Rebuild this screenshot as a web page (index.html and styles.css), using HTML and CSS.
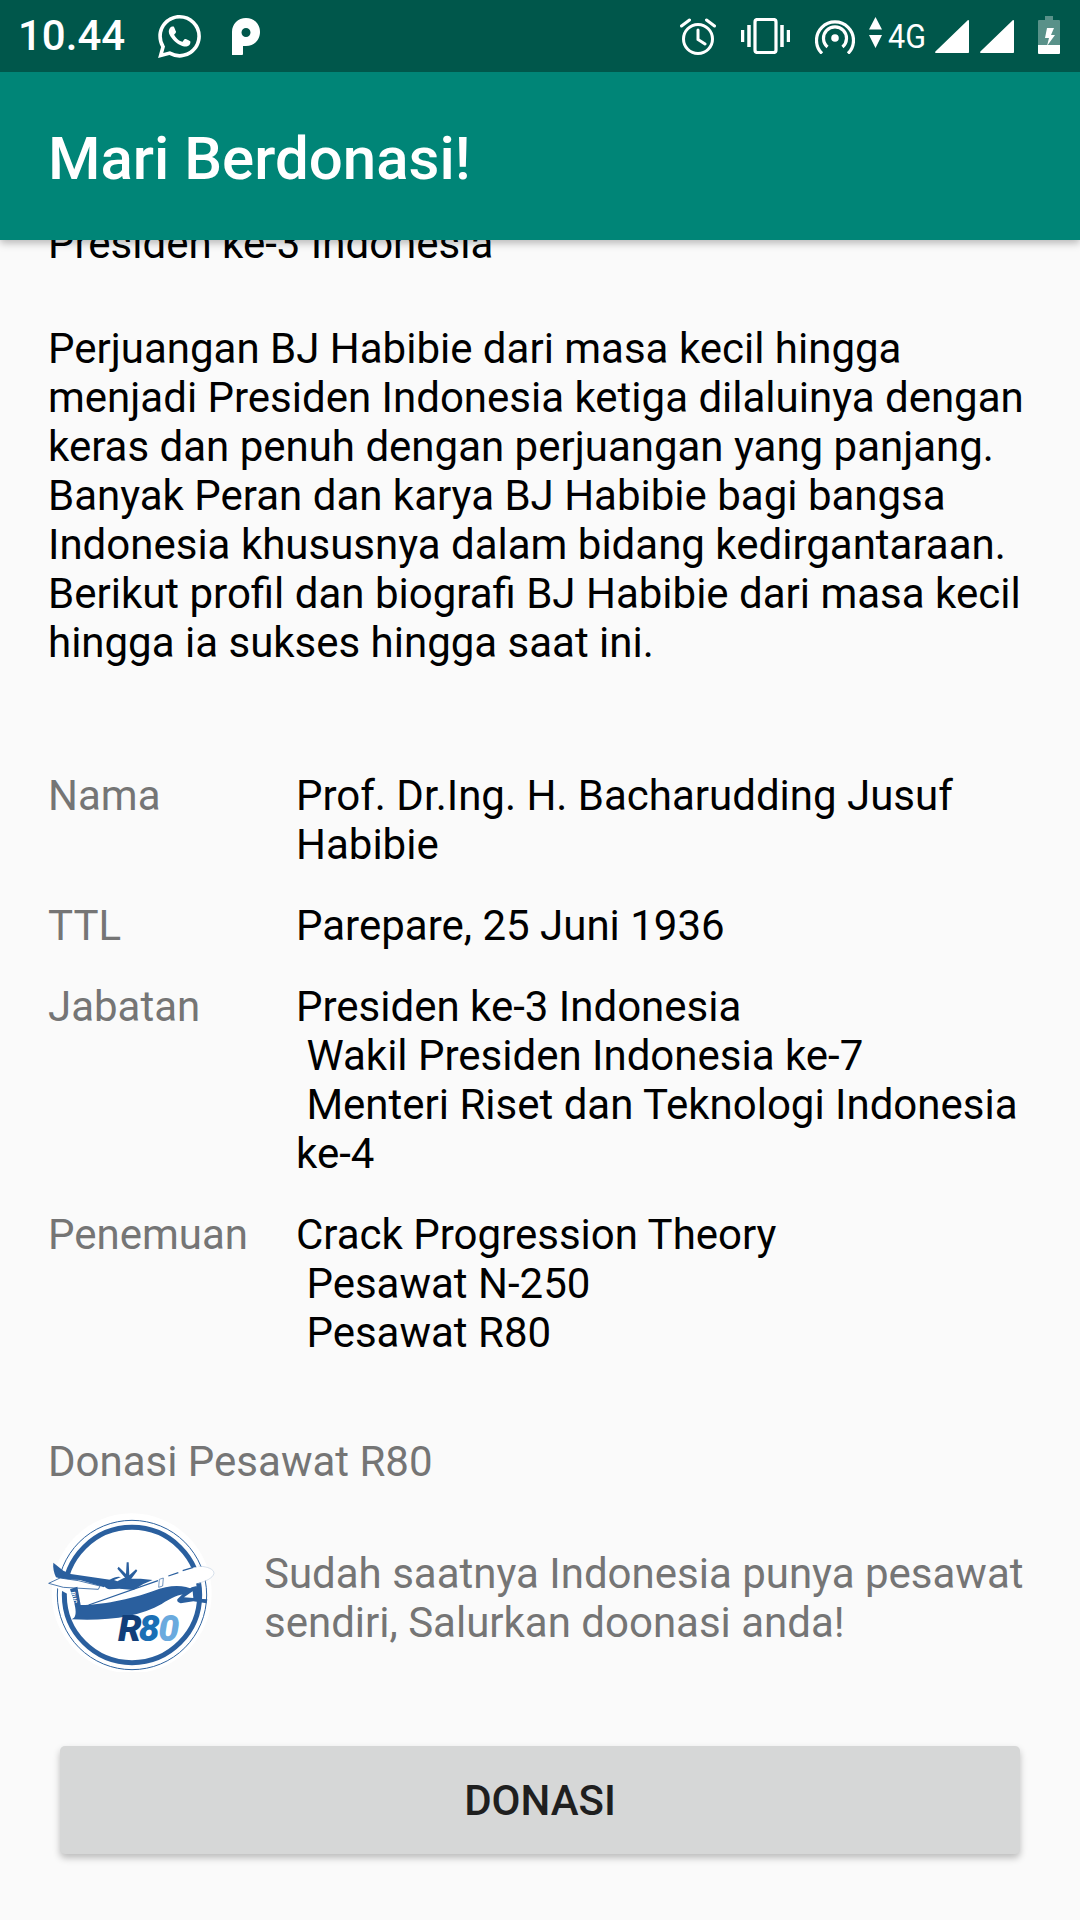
FILE: index.html
```html
<!DOCTYPE html>
<html lang="id">
<head>
<meta charset="utf-8">
<title>Mari Berdonasi!</title>
<link rel="stylesheet" href="styles.css">
</head>
<body>
<div class="screen">
  <header class="appbar-group">
    <div class="statusbar">
      <span class="clock">10.44</span>
      <svg class="ic-wa" viewBox="0 0 24 24"><path fill="#fff" d="M17.472 14.382c-.297-.149-1.758-.867-2.03-.967-.273-.099-.471-.148-.67.15-.197.297-.767.966-.94 1.164-.173.199-.347.223-.644.075-.297-.15-1.255-.463-2.39-1.475-.883-.788-1.48-1.761-1.653-2.059-.173-.297-.018-.458.13-.606.134-.133.298-.347.446-.52.149-.174.198-.298.298-.497.099-.198.05-.371-.025-.52-.075-.149-.669-1.612-.916-2.207-.242-.579-.487-.5-.669-.51-.173-.008-.371-.01-.57-.01-.198 0-.52.074-.792.372-.272.297-1.04 1.016-1.04 2.479 0 1.462 1.065 2.875 1.213 3.074.149.198 2.096 3.2 5.077 4.487.709.306 1.262.489 1.694.625.712.227 1.36.195 1.871.118.571-.085 1.758-.719 2.006-1.413.248-.694.248-1.289.173-1.413-.074-.124-.272-.198-.57-.347m-5.421 7.403h-.004a9.87 9.87 0 01-5.031-1.378l-.361-.214-3.741.982.998-3.648-.235-.374a9.86 9.86 0 01-1.51-5.26c.001-5.45 4.436-9.884 9.888-9.884 2.64 0 5.122 1.03 6.988 2.898a9.825 9.825 0 012.893 6.994c-.003 5.45-4.437 9.884-9.885 9.884m8.413-18.297A11.815 11.815 0 0012.05 0C5.495 0 .16 5.335.157 11.892c0 2.096.547 4.149 1.588 5.945L.057 24l6.305-1.654a11.882 11.882 0 005.683 1.448h.005c6.554 0 11.89-5.335 11.893-11.893a11.821 11.821 0 00-3.48-8.413z"/></svg>
      <svg class="ic-p" viewBox="0 0 30 37"><path fill="#fff" fill-rule="evenodd" d="M1 37V14C1 6 7 0 15 0s14 6 14 14-6 14-14 14h-3v8c0 1-1 1-2 1zM15 10a4.500 4.500 0 1 0 0 9 4.500 4.500 0 0 0 0-9z"/></svg>
      <span class="spacer"></span>
      <svg class="ic-alarm" viewBox="0 0 36 38" fill="none" stroke="#fff" stroke-width="3"><circle cx="18" cy="22" r="14.500"/><path d="M18 13v9.500l7 4.500M1.500 9l8-6M34.500 9l-8-6" stroke-linecap="round"/></svg>
      <svg class="ic-vib" viewBox="0 0 49 36" fill="none" stroke="#fff"><rect x="14" y="1.500" width="21" height="33" rx="2.500" stroke-width="3.200"/><path d="M1.500 12v12M8 7v22M47.500 12v12M41 7v22" stroke-width="3.500"/></svg>
      <svg class="ic-hot" viewBox="0 0 40 36" fill="none" stroke="#fff" stroke-width="3.200"><circle cx="20" cy="20" r="3.800" fill="#fff" stroke="none"/><path d="M12.500 29a11.500 11.500 0 1 1 15 0M7 35.500a18.500 18.500 0 1 1 26 0"/></svg>
      <svg class="ic-net" viewBox="0 0 57 31"><path fill="#fff" d="M0 12.500 6.500 0 13 12.500zM0 18h13L6.500 31z"/><text class="net-text" x="19" y="31" textLength="38" lengthAdjust="spacingAndGlyphs">4G</text></svg>
      <svg class="ic-sig" viewBox="0 0 34 33"><path fill="#fff" d="M1 33h32c.6 0 1-.4 1-1V1c0-1-.8-1.300-1.500-.6L.4 31.500C-.3 32.200 0 33 1 33z"/></svg>
      <svg class="ic-sig2" viewBox="0 0 34 33"><path fill="#fff" d="M1 33h32c.6 0 1-.4 1-1V1c0-1-.8-1.300-1.500-.6L.4 31.500C-.3 32.200 0 33 1 33z"/></svg>
      <svg class="ic-bat" viewBox="0 0 22 38"><path fill="#fff" opacity=".35" d="M7 0h8v4h6a1 1 0 0 1 1 1v24H0V5a1 1 0 0 1 1-1h6z"/><path fill="#fff" d="M0 29h22v8a1 1 0 0 1-1 1H1a1 1 0 0 1-1-1z"/><path fill="#fff" d="M9 12h7l-3 7h4l-8 11 2-8H7z"/></svg>
    </div>
    <div class="toolbar">Mari Berdonasi!</div>
  </header>

  <main class="content">
    <div class="scroll">
      <p class="line">Presiden ke-3 Indonesia</p>
      <p class="intro">Perjuangan BJ Habibie dari masa kecil hingga<br>menjadi Presiden Indonesia ketiga dilaluinya dengan<br>keras dan penuh dengan perjuangan yang panjang.<br>Banyak Peran dan karya BJ Habibie bagi bangsa<br>Indonesia khususnya dalam bidang kedirgantaraan.<br>Berikut profil dan biografi BJ Habibie dari masa kecil<br>hingga ia sukses hingga saat ini.</p>

      <dl class="facts">
        <dt>Nama</dt>
        <dd>Prof. Dr.Ing. H. Bacharudding Jusuf<br>Habibie</dd>
        <dt>TTL</dt>
        <dd>Parepare, 25 Juni 1936</dd>
        <dt>Jabatan</dt>
        <dd>Presiden ke-3 Indonesia<br>&nbsp;Wakil Presiden Indonesia ke-7<br>&nbsp;Menteri Riset dan Teknologi Indonesia<br>ke-4</dd>
        <dt>Penemuan</dt>
        <dd>Crack Progression Theory<br>&nbsp;Pesawat N-250<br>&nbsp;Pesawat R80</dd>
      </dl>

      <h2 class="donate-title">Donasi Pesawat R80</h2>
      <div class="donate-row">
        <svg class="logo" viewBox="48 36 510 480">
          <circle cx="305" cy="280" r="240" fill="#fff"/>
          <circle cx="306" cy="285" r="224" fill="none" stroke="#2e639f" stroke-width="3"/>
          <circle cx="306" cy="285" r="203" fill="none" stroke="#2a5f9e" stroke-width="15"/>
          <path fill="#fff" d="M55 250 150 236 300 262 460 208C505 195 548 200 552 218 548 238 510 248 470 258 400 285 300 325 160 340L118 285Z"/>
          <path fill="#2a5f9e" d="M70 188 100 212 122 222 245 240 222 262 150 240 100 238 78 232C72 220 68 202 70 188Z"/>
          <path fill="#fff" stroke="#2a5f9e" stroke-width="2.500" d="M56 250 90 234 145 242 210 258 205 268 100 262Z"/>
          <path fill="#2a5f9e" d="M224 252C232 240 250 232 266 230L296 236 332 236 368 240 340 252 310 270 268 266 238 268C228 266 222 260 224 252Z"/>
          <path fill="#fff" d="M252 240 280 228 286 232 262 244Z"/>
          <path fill="#2a5f9e" d="M290 187 296 187 298 226 318 208 322 212 304 236 304 252 288 252 284 232 262 206 266 200 288 222Z"/>
          <path fill="#2a5f9e" d="M120 268 142 260 152 315C200 316 300 300 370 273 420 253 462 254 492 270L478 282C450 280 425 292 395 312 330 350 230 364 125 358 150 350 130 300 120 268Z"/>
          <path fill="#2a5f9e" d="M442 298 462 278 485 262 500 258 508 296 532 298 530 310 490 304 452 310C444 308 440 304 442 298Z"/>
          <path fill="#fff" d="M462 292 488 274 490 294Z"/>
          <path fill="none" stroke="#2a5f9e" stroke-width="3.500" d="M176 315 384 242M415 228 445 218M458 212 490 202"/>
          <path fill="none" stroke="#2a5f9e" stroke-width="2" d="M388 238 400 234 398 258 386 262Z"/>
          <path fill="none" stroke="#c4d2e2" stroke-width="2" d="M505 198C535 200 552 208 552 220 548 236 525 244 505 250"/>
          <text class="logo-tag" transform="translate(122 277) rotate(78)">RUC</text>
          <text class="logo-r" x="264" y="422">R</text>
          <text class="logo-8" x="326" y="422">8</text>
          <text class="logo-0" x="385" y="422">0</text>
        </svg>
        <p class="donate-text">Sudah saatnya Indonesia punya pesawat<br>sendiri, Salurkan doonasi anda!</p>
      </div>
      <button class="donate-btn" type="button">DONASI</button>
    </div>
  </main>
</div>
</body>
</html>
```
FILE: styles.css
```css
* { box-sizing: border-box; }
html, body { margin: 0; padding: 0; }
body {
  width: 1080px;
  height: 1920px;
  background: #fafafa;
  font-family: Roboto, "Noto Sans", sans-serif;
  overflow: hidden;
}
.screen { width: 1080px; height: 1920px; display: flex; flex-direction: column; overflow: hidden; }
.appbar-group { flex: none; position: relative; z-index: 2; box-shadow: 0 3px 8px rgba(0,0,0,.28); }
.statusbar {
  height: 72px;
  background: #00574b;
  display: flex;
  align-items: flex-start;
  padding-left: 18px;
  padding-right: 20px;
}
.statusbar svg { flex: none; display: block; }
.clock { color: #fff; font-size: 42px; font-weight: 500; line-height: 72px; width: 140px; }
.ic-wa { width: 43px; height: 43px; margin-top: 15px; }
.ic-p { width: 30px; height: 37px; margin-top: 18px; margin-left: 30px; }
.spacer { flex: 1; }
.ic-alarm { width: 36px; height: 38px; margin-top: 17px; }
.ic-vib { width: 49px; height: 36px; margin-top: 18px; margin-left: 25px; }
.ic-hot { width: 40px; height: 36px; margin-top: 18px; margin-left: 25px; }
.ic-net { width: 57px; height: 31px; margin-top: 17px; margin-left: 14px; overflow: visible; }
.net-text { fill: #fff; font-family: Roboto, sans-serif; font-size: 34px; }
.ic-sig { width: 34px; height: 33px; margin-top: 20px; margin-left: 9px; }
.ic-sig2 { width: 34px; height: 33px; margin-top: 20px; margin-left: 11px; }
.ic-bat { width: 22px; height: 38px; margin-top: 16px; margin-left: 24px; }
.toolbar {
  height: 168px;
  background: #008577;
  color: #fff;
  font-size: 60px;
  font-weight: 500;
  display: flex;
  align-items: center;
  padding: 4px 0 0 48px;
}
.content { flex: 1; overflow: hidden; }
.scroll {
  margin-top: -21px;
  padding: 0 0 0 48px;
  font-size: 42px;
  line-height: 49px;
  color: #000;
}
.line, .intro { margin: 0; }
.intro { margin-top: 56px; }
.facts {
  margin: 104px 0 0;
  display: grid;
  grid-template-columns: 248px 1fr;
  row-gap: 32px;
}
.facts dt { color: #757575; }
.facts dd { margin: 0; }
.donate-title { margin: 80px 0 0; font: inherit; color: #757575; }
.donate-row { display: flex; align-items: center; margin-top: 26px; }
.logo { flex: none; width: 170px; height: 160px; margin-left: -2px; }
.donate-text { margin: 12px 0 0 48px; color: #757575; }
.donate-btn {
  display: block;
  width: 960px;
  height: 108px;
  margin: 74px 0 0 12px;
  border: 0;
  border-radius: 5px;
  background: #d6d7d7;
  box-shadow: 0 4px 7px rgba(0,0,0,.25);
  color: #1f1f1f;
  font-family: Roboto, sans-serif;
  font-size: 42px;
  font-weight: 500;
}
.logo-r, .logo-8, .logo-0 { font-family: Roboto, sans-serif; font-size: 112px; font-weight: 900; font-style: italic; }
.logo-r { fill: #123f7a; }
.logo-8 { fill: #1a6fb5; }
.logo-0 { fill: #6aaade; }
.logo-tag { fill: #fff; font-family: Roboto, sans-serif; font-size: 18px; font-weight: 700; }
```
